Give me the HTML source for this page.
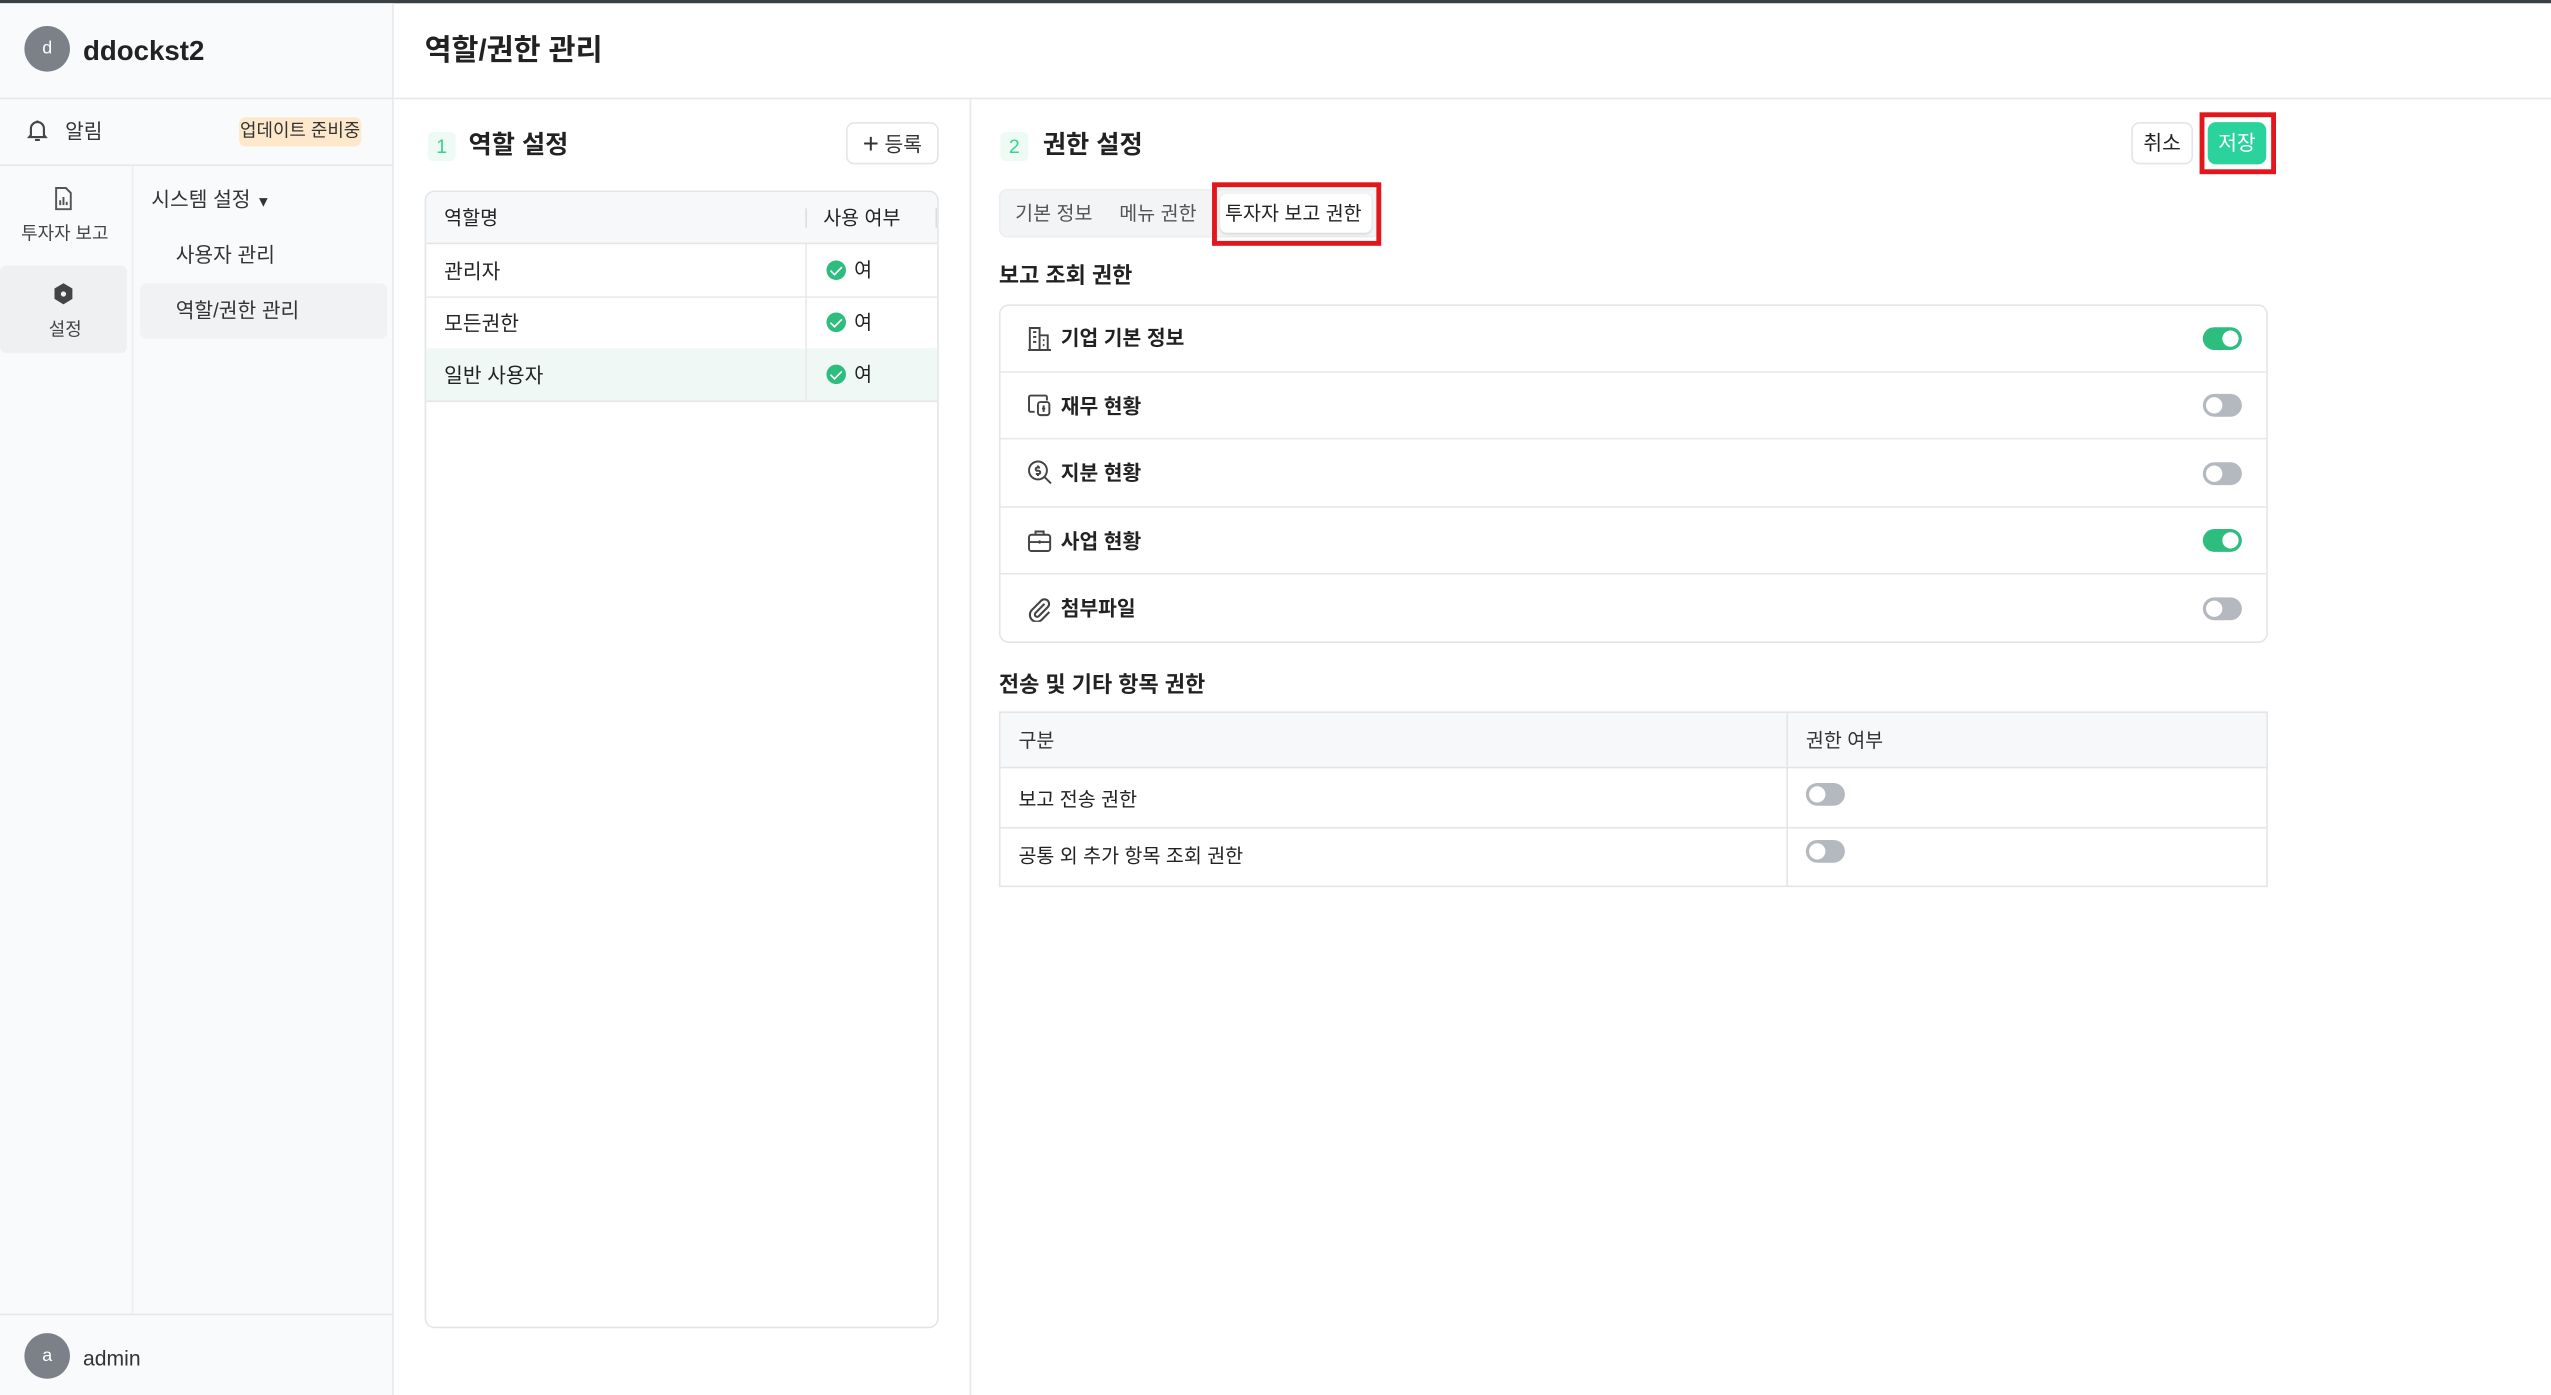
<!DOCTYPE html>
<html><head><meta charset="utf-8"><style>
*{box-sizing:border-box;margin:0;padding:0}
html,body{width:2551px;height:1395px;overflow:hidden;background:#fff}
#s{position:absolute;left:0;top:0;width:1568px;height:857px;transform:scale(1.6269,1.6278);transform-origin:0 0;font-family:"Liberation Sans","Noto Sans CJK KR",sans-serif;color:#222;font-size:13px}
.a{position:absolute}
.t{position:absolute;white-space:nowrap;line-height:1;margin-top:1px}
.tog{position:absolute;width:24px;height:14px;border-radius:7px;background:#b4b9c0}
.tog::after{content:"";position:absolute;top:2px;left:2px;width:10px;height:10px;border-radius:50%;background:#fff}
.tog.on{background:#2dbd7e}.tog.on::after{left:12px}
.chk{position:absolute;width:12px;height:12px;border-radius:50%;background:#2dbd7e}
.chk::after{content:"";position:absolute;left:4px;top:2px;width:3px;height:6px;border:solid #fff;border-width:0 1.5px 1.5px 0;transform:rotate(45deg)}
.ic{position:absolute;width:16px;height:16px}
</style></head><body><div id="s">
<div class="a" style="left:0;top:0;width:1568px;height:2px;background:#3a3f44"></div>
<div class="a" style="left:0;top:2px;width:242px;height:855px;background:#f9fafb;border-right:1px solid #e6e8eb"></div>
<div class="a" style="left:15px;top:16px;width:28px;height:28px;border-radius:50%;background:#7b8089;color:#fff;font-size:11px;text-align:center;line-height:28px">d</div>
<div class="t" style="left:51px;top:22px;font-size:17px;font-weight:bold;color:#222">ddockst2</div>
<div class="a" style="left:0;top:60px;width:1568px;height:1px;background:#e6e8eb"></div>
<svg class="ic" style="left:15px;top:72px" viewBox="0 0 16 16" fill="none" stroke="#444" stroke-width="1.3"><path d="M4 11V7a4 4 0 0 1 8 0v4l1 1.2H3zM6.5 14h3M8 2v1"/></svg>
<div class="t" style="left:40px;top:74px;font-size:12.5px;color:#333">알림</div>
<div class="a" style="left:147px;top:72px;width:75px;height:18px;border-radius:4px;background:#fde8cc;font-size:11px;line-height:19px;text-align:center;color:#333">업데이트 준비중</div>
<div class="a" style="left:0;top:101px;width:242px;height:1px;background:#e6e8eb"></div>
<div class="a" style="left:81px;top:102px;width:1px;height:705px;background:#eceef0"></div>
<svg class="ic" style="left:31px;top:114px" viewBox="0 0 16 16" fill="none" stroke="#555" stroke-width="1.2"><path d="M3.5 1.5h6l3 3v10h-9z"/><path d="M6 12V9M8 12V7M10 12v-2"/></svg>
<div class="t" style="left:13px;top:138px;font-size:11px;color:#444">투자자 보고</div>
<div class="a" style="left:0;top:163px;width:78px;height:54px;border-radius:4px;background:#eff0f2"></div>
<svg class="ic" style="left:31px;top:173px" viewBox="0 0 16 16"><path d="M8 1l5.5 3.2v6.4L8 14l-5.5-3.4V4.2z" fill="#444"/><circle cx="8" cy="7.6" r="1.6" fill="#eff0f2"/></svg>
<div class="t" style="left:30px;top:197px;font-size:11px;color:#444">설정</div>
<div class="t" style="left:93px;top:116px;font-size:12.5px;color:#333">시스템 설정 <span style="font-size:9px">▼</span></div>
<div class="t" style="left:108px;top:150px;font-size:12.5px;color:#333">사용자 관리</div>
<div class="a" style="left:86px;top:174px;width:152px;height:34px;border-radius:4px;background:#f1f2f4"></div>
<div class="t" style="left:108px;top:184px;font-size:12.5px;color:#333">역할/권한 관리</div>
<div class="a" style="left:0;top:807px;width:242px;height:1px;background:#e6e8eb"></div>
<div class="a" style="left:15px;top:819px;width:28px;height:28px;border-radius:50%;background:#7b8089;color:#fff;font-size:11px;text-align:center;line-height:28px">a</div>
<div class="t" style="left:51px;top:827px;font-size:13px;color:#333">admin</div>
<div class="t" style="left:261px;top:21px;font-size:18px;font-weight:bold;color:#222">역할/권한 관리</div>
<div class="a" style="left:596px;top:61px;width:1px;height:796px;background:#e6e8eb"></div>
<div class="a" style="left:263px;top:81px;width:17px;height:18px;border-radius:3px;background:#eefaf4;color:#3ccf8e;font-size:12px;line-height:18px;text-align:center">1</div>
<div class="t" style="left:288px;top:81px;font-size:15.5px;font-weight:bold">역할 설정</div>
<div class="a" style="left:520px;top:75px;width:57px;height:26px;border:1px solid #e3e5e8;border-radius:5px;font-size:12.5px;line-height:25px;text-align:center;color:#333"><span style="font-size:17px;vertical-align:-1px">+</span> 등록</div>
<div class="a" style="left:261px;top:117px;width:316px;height:699px;border:1px solid #e3e5e8;border-radius:6px;overflow:hidden">
 <div class="a" style="left:0;top:0;width:316px;height:32px;background:#f7f8f9;border-bottom:1px solid #e3e5e8"></div>
 <div class="a" style="left:233px;top:10px;width:1px;height:12px;background:#ddd"></div>
 <div class="a" style="left:313px;top:10px;width:1px;height:12px;background:#ddd"></div>
 <div class="t" style="left:11px;top:9px;font-size:12px">역할명</div>
 <div class="t" style="left:244px;top:9px;font-size:12px">사용 여부</div>
 <div class="a" style="left:0;top:64px;width:316px;height:1px;background:#e8eaed"></div>
 <div class="a" style="left:0;top:96px;width:316px;height:33px;background:#eff8f4;border-bottom:1px solid #e3e5e8"></div>
 <div class="a" style="left:233px;top:32px;width:1px;height:97px;background:#e8eaed"></div>
 <div class="t" style="left:11px;top:42px;font-size:12.5px">관리자</div>
 <div class="t" style="left:11px;top:74px;font-size:12.5px">모든권한</div>
 <div class="t" style="left:11px;top:106px;font-size:12.5px">일반 사용자</div>
 <div class="chk" style="left:246px;top:42px"></div><div class="t" style="left:263px;top:41px;font-size:12px">여</div>
 <div class="chk" style="left:246px;top:74px"></div><div class="t" style="left:263px;top:73px;font-size:12px">여</div>
 <div class="chk" style="left:246px;top:106px"></div><div class="t" style="left:263px;top:105px;font-size:12px">여</div>
</div>
<div class="a" style="left:615px;top:81px;width:17px;height:18px;border-radius:3px;background:#eefaf4;color:#3ccf8e;font-size:12px;line-height:18px;text-align:center">2</div>
<div class="t" style="left:641px;top:81px;font-size:15.5px;font-weight:bold">권한 설정</div>
<div class="a" style="left:1310px;top:75px;width:38px;height:26px;border:1px solid #e3e5e8;border-radius:5px;font-size:12.5px;line-height:25px;text-align:center">취소</div>
<div class="a" style="left:1357px;top:75px;width:36px;height:26px;border-radius:5px;background:#2ad39c;color:#fff;font-size:12.5px;line-height:27px;text-align:center">저장</div>
<div class="a" style="left:1352px;top:69px;width:47px;height:38px;border:3px solid #e3161b"></div>
<div class="a" style="left:614px;top:116px;width:234px;height:30px;border-radius:5px;background:#f3f4f6;border:1px solid #eceef0"></div>
<div class="a" style="left:750px;top:119px;width:93px;height:24px;border-radius:4px;background:#fff;box-shadow:0 1px 2px rgba(0,0,0,.12)"></div>
<div class="t" style="left:624px;top:124px;font-size:12px;color:#555">기본 정보</div>
<div class="t" style="left:688px;top:124px;font-size:12px;color:#555">메뉴 권한</div>
<div class="t" style="left:753px;top:124px;font-size:12px;color:#222">투자자 보고 권한</div>
<div class="a" style="left:745px;top:112px;width:104px;height:39px;border:3px solid #e3161b"></div>
<div class="t" style="left:614px;top:162px;font-size:13.5px;font-weight:bold">보고 조회 권한</div>
<div class="a" style="left:614px;top:187px;width:780px;height:208px;border:1px solid #e3e5e8;border-radius:6px"></div>
<div class="a" style="left:615px;top:228px;width:778px;height:1px;background:#e6e8eb"></div>
<div class="a" style="left:615px;top:269px;width:778px;height:1px;background:#e6e8eb"></div>
<div class="a" style="left:615px;top:311px;width:778px;height:1px;background:#e6e8eb"></div>
<div class="a" style="left:615px;top:352px;width:778px;height:1px;background:#e6e8eb"></div>
<svg class="ic" style="left:631px;top:200px" viewBox="0 0 16 16" fill="none" stroke="#444" stroke-width="1.2"><path d="M2 15V1.5h6V15M8 6h5v9M1 15h14M4 4h2M4 7h2M4 10h2M10 9h1M10 12h1"/></svg>
<div class="t" style="left:652px;top:201px;font-size:12.5px;font-weight:bold">기업 기본 정보</div>
<svg class="ic" style="left:631px;top:241px" viewBox="0 0 16 16" fill="none" stroke="#444" stroke-width="1.2"><path d="M5 12H2.5a1 1 0 0 1-1-1V3a1 1 0 0 1 1-1h9a1 1 0 0 1 1 1v2"/><rect x="7" y="6" width="7" height="8" rx="1.5"/><path d="M10.5 8v4M9.5 10h2"/></svg>
<div class="t" style="left:652px;top:243px;font-size:12.5px;font-weight:bold">재무 현황</div>
<svg class="ic" style="left:631px;top:282px" viewBox="0 0 16 16" fill="none" stroke="#444" stroke-width="1.2"><circle cx="7" cy="7" r="5.5"/><path d="M11 11l4 4M8.3 5.2H6.6a1 1 0 0 0 0 2h.8a1 1 0 0 1 0 2H5.7M7 4v1.2M7 9.2v1.2"/></svg>
<div class="t" style="left:652px;top:284px;font-size:12.5px;font-weight:bold">지분 현황</div>
<svg class="ic" style="left:631px;top:324px" viewBox="0 0 16 16" fill="none" stroke="#444" stroke-width="1.2"><rect x="1.5" y="4.5" width="13" height="10" rx="1.5"/><path d="M5.5 4.5V2.5h5v2M1.5 9h13M8 8v2"/></svg>
<div class="t" style="left:652px;top:326px;font-size:12.5px;font-weight:bold">사업 현황</div>
<svg class="ic" style="left:631px;top:366px" viewBox="0 0 16 16" fill="none" stroke="#444" stroke-width="1.3"><path d="M11 5l-5.5 5.5a1.4 1.4 0 0 0 2 2L13 7a2.8 2.8 0 0 0-4-4L3.3 8.7a4.2 4.2 0 0 0 6 6L14 10"/></svg>
<div class="t" style="left:652px;top:367px;font-size:12.5px;font-weight:bold">첨부파일</div>
<div class="tog on" style="left:1354px;top:201px"></div>
<div class="tog" style="left:1354px;top:242px"></div>
<div class="tog" style="left:1354px;top:284px"></div>
<div class="tog on" style="left:1354px;top:325px"></div>
<div class="tog" style="left:1354px;top:367px"></div>
<div class="t" style="left:614px;top:413px;font-size:13.5px;font-weight:bold">전송 및 기타 항목 권한</div>
<div class="a" style="left:614px;top:437px;width:780px;height:108px;border:1px solid #e3e5e8"></div>
<div class="a" style="left:615px;top:438px;width:778px;height:34px;background:#f7f8f9;border-bottom:1px solid #e3e5e8"></div>
<div class="a" style="left:615px;top:508px;width:778px;height:1px;background:#e3e5e8"></div>
<div class="a" style="left:1098px;top:438px;width:1px;height:106px;background:#e3e5e8"></div>
<div class="t" style="left:626px;top:448px;font-size:12px;color:#333">구분</div>
<div class="t" style="left:1110px;top:448px;font-size:12px;color:#333">권한 여부</div>
<div class="t" style="left:626px;top:484px;font-size:12px;color:#222">보고 전송 권한</div>
<div class="t" style="left:626px;top:519px;font-size:12px;color:#222">공통 외 추가 항목 조회 권한</div>
<div class="tog" style="left:1110px;top:481px"></div>
<div class="tog" style="left:1110px;top:516px"></div>
</div></body></html>
